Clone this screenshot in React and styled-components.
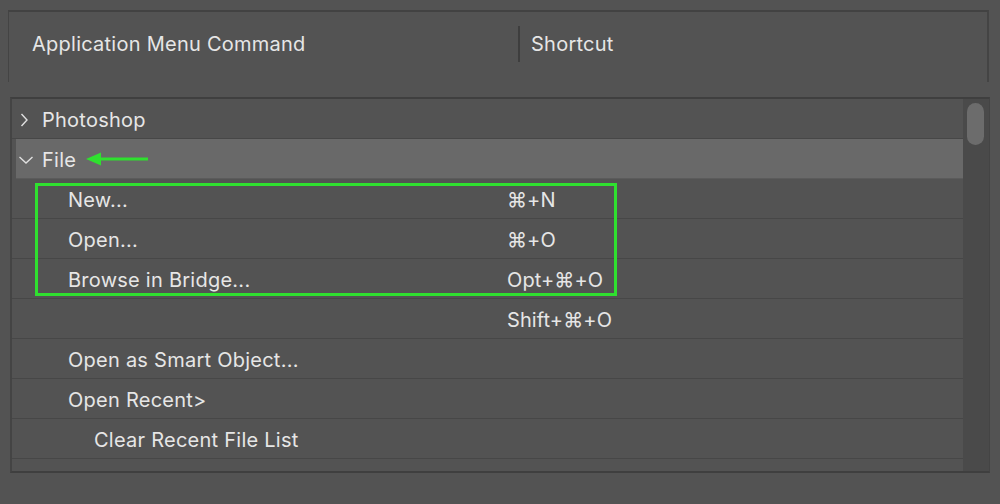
import React from "react";
import styled, { createGlobalStyle } from "styled-components";

const Global = createGlobalStyle`
  html, body {
    margin: 0;
    padding: 0;
    background: #535353;
  }
  body {
    font-family: Inter, "Noto Sans", "Liberation Sans", sans-serif;
    color: #e6e6e6;
    -webkit-font-smoothing: antialiased;
  }
`;

const Page = styled.div`
  width: 1000px;
  height: 504px;
  padding-top: 10px;
  box-sizing: border-box;
  position: relative;
  overflow: hidden;
`;

const Header = styled.div`
  margin-left: 8px;
  width: 981px;
  height: 72px;
  box-sizing: border-box;
  border-top: 2px solid #424242;
  border-left: 1px solid #444444;
  border-right: 2px solid #444444;
  display: flex;
  align-items: center;
  font-size: 20px;
  letter-spacing: 0.25px;
`;

const HeadCell = styled.div`
  width: ${(p) => p.$w || "auto"};
  padding-left: ${(p) => p.$pad}px;
  box-sizing: border-box;
  margin-top: -6px;
`;

const Divider = styled.div`
  width: 2px;
  height: 36px;
  background: #3e3e3e;
  margin-top: -6px;
`;

const List = styled.div`
  margin-top: 15px;
  margin-left: 10px;
  width: 980px;
  height: 376px;
  box-sizing: border-box;
  border-top: 2px solid #3f3f3f;
  border-left: 2px solid #444444;
  border-bottom: 2px solid #3f3f3f;
  border-right: 1px solid #444444;
  display: flex;
  overflow: hidden;
`;

const Rows = styled.div`
  flex: 1;
  display: flex;
  flex-direction: column;
  overflow: hidden;
`;

const Row = styled.div`
  flex: 0 0 40px;
  height: 40px;
  padding-top: 3px;
  box-sizing: border-box;
  border-bottom: 1px solid #474747;
  display: grid;
  grid-template-columns: 495px 1fr;
  align-items: center;
  font-size: 20px;
  letter-spacing: 0.25px;
  position: relative;
  background: ${(p) => (p.$active ? "#696969" : "transparent")};
  margin-left: ${(p) => (p.$active ? "4px" : "0")};
  border-bottom-color: ${(p) => (p.$active ? "#5b5b5b" : "#474747")};
`;

const Label = styled.div`
  padding-left: ${(p) => p.$indent}px;
  white-space: nowrap;
  position: relative;
`;

const Chevron = styled.svg`
  position: absolute;
  left: ${(p) => p.$left}px;
  top: 50%;
  transform: translateY(-50%);
`;

const Keys = styled.div`
  white-space: nowrap;
  letter-spacing: 0.1px;
`;

const Scroll = styled.div`
  width: 26px;
  flex: 0 0 26px;
  background: #4a4a4a;
  padding: 4px 5px 0 4px;
  box-sizing: border-box;
`;

const Thumb = styled.div`
  width: 17px;
  height: 42px;
  border-radius: 9px;
  background: #6c6c6c;
`;

const Highlight = styled.div`
  position: absolute;
  left: 35px;
  top: 183px;
  width: 582px;
  height: 113px;
  box-sizing: border-box;
  border: 3px solid #2fe02f;
  pointer-events: none;
`;

const Arrow = styled.svg`
  position: absolute;
  left: 84px;
  top: 151px;
`;

const items = [
  { label: "Photoshop", level: 0, chevron: "right" },
  { label: "File", level: 0, chevron: "down", active: true },
  { label: "New...", level: 1, keys: "⌘+N" },
  { label: "Open...", level: 1, keys: "⌘+O" },
  { label: "Browse in Bridge...", level: 1, keys: "Opt+⌘+O" },
  { label: "", level: 1, keys: "Shift+⌘+O" },
  { label: "Open as Smart Object...", level: 1 },
  { label: "Open Recent>", level: 1 },
  { label: "Clear Recent File List", level: 2 },
  { label: "Close...", level: 1, keys: "⌘+W" },
];

const indents = [30, 56, 82];

function ChevronIcon({ dir, left }) {
  return (
    <Chevron $left={left} width="16" height="16" viewBox="0 0 16 16">
      {dir === "right" ? (
        <path d="M5.5 2 L11 8 L5.5 14" fill="none" stroke="#e0e0e0" strokeWidth="1.4" />
      ) : (
        <path d="M1.5 5 L8 11 L14.5 5" fill="none" stroke="#e0e0e0" strokeWidth="1.4" />
      )}
    </Chevron>
  );
}

export default function App() {
  return (
    <Page>
      <Global />
      <Header>
        <HeadCell $w="509px" $pad={23}>Application Menu Command</HeadCell>
        <Divider />
        <HeadCell $pad={11}>Shortcut</HeadCell>
      </Header>
      <List>
        <Rows>
          {items.map((it, i) => (
            <Row key={i} $active={it.active}>
              <Label $indent={it.active ? indents[it.level] - 4 : indents[it.level]}>
                {it.chevron && (
                  <ChevronIcon dir={it.chevron} left={it.active ? 2 : 4} />
                )}
                {it.label}
              </Label>
              <Keys>{it.keys || ""}</Keys>
            </Row>
          ))}
        </Rows>
        <Scroll>
          <Thumb />
        </Scroll>
      </List>
      <Highlight />
      <Arrow width="66" height="16" viewBox="0 0 66 16">
        <line x1="12" y1="8" x2="64" y2="8" stroke="#2fe02f" strokeWidth="3" />
        <polygon points="2,8 17,1.5 17,14.5" fill="#2fe02f" />
      </Arrow>
    </Page>
  );
}
